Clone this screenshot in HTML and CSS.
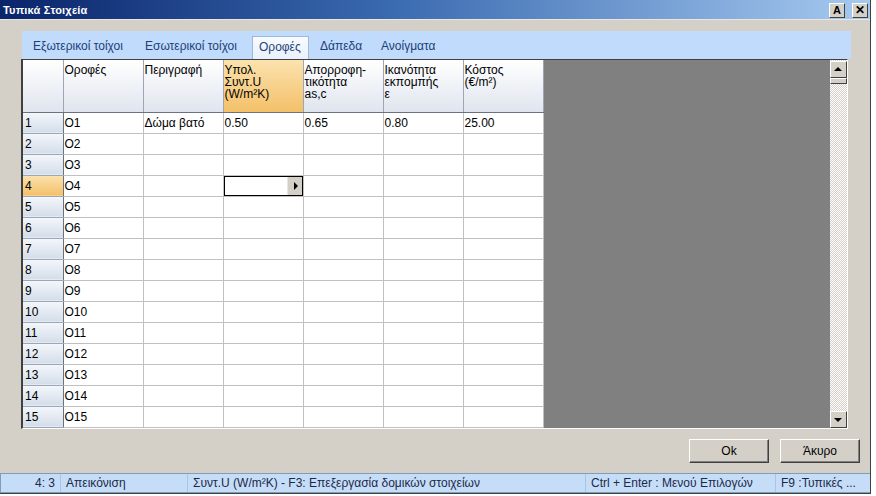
FILE: index.html
```html
<!DOCTYPE html>
<html>
<head>
<meta charset="utf-8">
<link rel="stylesheet" href="styles.css">
</head>
<body>
<div class="window">
  <div class="titlebar">
    <span class="title">Τυπικά Στοιχεία</span>
    <div class="tbtns">
      <span class="tbtn">A</span>
      <span class="tbtn x">✕</span>
    </div>
  </div>
  <div class="content">
    <div class="tabstrip">
      <span class="tab">Εξωτερικοί τοίχοι</span>
      <span class="tab">Εσωτερικοί τοίχοι</span>
      <span class="tab active">Οροφές</span>
      <span class="tab">Δάπεδα</span>
      <span class="tab">Ανοίγματα</span>
    </div>
    <div class="gridbox">
      <table class="grid">
        <thead>
          <tr>
            <th class="rh"></th>
            <th>Οροφές</th>
            <th>Περιγραφή</th>
            <th class="sel">Υπολ.<br>Συντ.U<br>(W/m²K)</th>
            <th>Απορροφη-<br>τικότητα<br>as,c</th>
            <th>Ικανότητα<br>εκπομπής<br>ε</th>
            <th>Κόστος<br>(€/m²)</th>
          </tr>
        </thead>
        <tbody>
          <tr><td class="rh">1</td><td>O1</td><td>Δώμα βατό</td><td>0.50</td><td>0.65</td><td>0.80</td><td>25.00</td></tr>
          <tr><td class="rh">2</td><td>O2</td><td></td><td></td><td></td><td></td><td></td></tr>
          <tr><td class="rh">3</td><td>O3</td><td></td><td></td><td></td><td></td><td></td></tr>
          <tr><td class="rh sel">4</td><td>O4</td><td></td><td class="edit"><span class="editor"><span class="ebtn"></span></span></td><td></td><td></td><td></td></tr>
          <tr><td class="rh">5</td><td>O5</td><td></td><td></td><td></td><td></td><td></td></tr>
          <tr><td class="rh">6</td><td>O6</td><td></td><td></td><td></td><td></td><td></td></tr>
          <tr><td class="rh">7</td><td>O7</td><td></td><td></td><td></td><td></td><td></td></tr>
          <tr><td class="rh">8</td><td>O8</td><td></td><td></td><td></td><td></td><td></td></tr>
          <tr><td class="rh">9</td><td>O9</td><td></td><td></td><td></td><td></td><td></td></tr>
          <tr><td class="rh">10</td><td>O10</td><td></td><td></td><td></td><td></td><td></td></tr>
          <tr><td class="rh">11</td><td>O11</td><td></td><td></td><td></td><td></td><td></td></tr>
          <tr><td class="rh">12</td><td>O12</td><td></td><td></td><td></td><td></td><td></td></tr>
          <tr><td class="rh">13</td><td>O13</td><td></td><td></td><td></td><td></td><td></td></tr>
          <tr><td class="rh">14</td><td>O14</td><td></td><td></td><td></td><td></td><td></td></tr>
          <tr><td class="rh">15</td><td>O15</td><td></td><td></td><td></td><td></td><td></td></tr>
        </tbody>
      </table>
      <div class="filler"></div>
      <div class="vscroll">
        <span class="sbtn up"></span>
        <span class="thumb"></span>
        <span class="track"></span>
        <span class="sbtn down"></span>
      </div>
    </div>
  </div>
  <div class="buttons">
    <button class="btn">Ok</button>
    <button class="btn">Άκυρο</button>
  </div>
  <div class="statusbar">
    <span class="sb s1">4: 3</span>
    <span class="sb s2">Απεικόνιση</span>
    <span class="sb s3">Συντ.U (W/m²K) - F3: Επεξεργασία δομικών στοιχείων</span>
    <span class="sb s4">Ctrl + Enter : Μενού Επιλογών</span>
    <span class="sb s5">F9 :Τυπικές ...</span>
  </div>
</div>
</body>
</html>
```

FILE: styles.css
```css
* { box-sizing: border-box; }
html, body { margin: 0; padding: 0; }
body {
  background: #ffffff;
  font-family: "Liberation Sans", Arial, sans-serif;
  font-size: 12px;
  color: #000;
  width: 876px;
  height: 496px;
  overflow: hidden;
}
.window {
  width: 871px;
  height: 494px;
  background: #d4d0c8;
  border-right: 1px solid #404040;
  border-bottom: 1px solid #404040;
  display: flex;
  flex-direction: column;
}
.titlebar {
  height: 21px;
  background: linear-gradient(to right, #0a246a 0%, #3a6ab0 45%, #a6caf0 100%);
  display: flex;
  align-items: center;
  justify-content: space-between;
  padding: 0 2px 0 3px;
  border-bottom: 1px solid #e8e6e0;
}
.title {
  color: #fff;
  font-weight: bold;
  font-size: 11px;
  letter-spacing: 0.2px;
}
.tbtns { display: flex; gap: 7px; padding-top: 1px; }
.tbtn {
  width: 16px;
  height: 15px;
  background: #d4d0c8;
  border: 1px solid;
  border-color: #fff #404040 #404040 #fff;
  font-size: 11px;
  font-weight: bold;
  line-height: 13px;
  text-align: center;
  color: #000;
}
.tbtn.x { font-size: 12px; }
.content {
  padding: 11px 0 0 22px;
}
.tabstrip {
  width: 829px;
  height: 28px;
  background: #c0dbfb;
  display: flex;
  align-items: flex-end;
  padding-left: 5px;
}
.tab {
  height: 23px;
  line-height: 21px;
  padding: 0 6px;
  color: #1c3f78;
  white-space: nowrap;
}
.tab:nth-child(1) { width: 112px; }
.tab:nth-child(2) { width: 113px; }
.tab.active {
  width: 57px;
  background: linear-gradient(#f8fbff, #e9f1fb);
  border: 1px solid #9eb8d8;
  border-bottom: none;
}
.tab:nth-child(4) { width: 66px; padding-left: 11px; }
.gridbox {
  width: 827px;
  height: 370px;
  margin-left: -1px;
  display: flex;
  border-top: 1px solid #404040;
  border-left: 2px solid #404040;
  border-right: 1px solid #ffffff;
  border-bottom: 1px solid #ffffff;
  background: #808080;
}
.grid {
  border-collapse: collapse;
  table-layout: fixed;
  width: 520px;
  background: #fff;
  align-self: flex-start;
}
.grid th, .grid td {
  width: 80px;
  border-right: 1px solid #c0c0c0;
  border-bottom: 1px solid #c0c0c0;
  padding: 0 0 0 1px;
  text-align: left;
  white-space: nowrap;
  overflow: hidden;
}
.grid th.rh, .grid td.rh { width: 40px; padding-left: 2px; }
.grid th {
  height: 52px;
  vertical-align: top;
  font-weight: normal;
  line-height: 12px;
  padding-top: 4px;
  background: linear-gradient(#ffffff, #dfe5ee);
  border-right: 1px solid #9ca6b4;
  border-bottom: 1px solid #6a7280;
  color: #000;
}
.grid th.sel {
  background: linear-gradient(#fbe2ae, #f3c069);
}
.grid td {
  height: 21px;
  line-height: 20px;
  vertical-align: middle;
}
.grid td.rh {
  background: linear-gradient(#f4f7fb, #d3dde9);
  border-right: 1px solid #6a7280;
  border-bottom: 1px solid #9ca6b4;
}
.grid td.rh.sel {
  background: linear-gradient(#fbe2ae, #f3c069);
}
.grid td.edit {
  padding: 0;
  box-shadow: inset 0 0 0 1px #000;
}
.editor {
  display: flex;
  justify-content: flex-end;
  height: 20px;
  padding: 1px 1px 1px 0;
}
.ebtn {
  width: 15px;
  height: 18px;
  background: #d4d0c8;
  border-left: 1px solid #e8e6e0;
  position: relative;
}
.ebtn::after {
  content: "";
  position: absolute;
  left: 6px;
  top: 5px;
  border-left: 4px solid #000;
  border-top: 4px solid transparent;
  border-bottom: 4px solid transparent;
}
.filler { flex: 1; }
.vscroll {
  width: 17px;
  display: flex;
  flex-direction: column;
  padding-top: 1px;
  background: repeating-conic-gradient(#d4d0c8 0 25%, #ffffff 0 50%) 0 0 / 2px 2px;
}
.sbtn {
  width: 17px;
  height: 17px;
  background: #d4d0c8;
  border: 1px solid;
  border-color: #fff #404040 #404040 #fff;
  position: relative;
  flex: none;
}
.sbtn::after {
  content: "";
  position: absolute;
  left: 3px;
  border-left: 4px solid transparent;
  border-right: 4px solid transparent;
}
.sbtn.up::after { top: 5px; border-bottom: 4px solid #000; }
.sbtn.down::after { top: 6px; border-top: 4px solid #000; }
.thumb {
  height: 6px;
  background: #d4d0c8;
  border: 1px solid;
  border-color: #fff #404040 #404040 #fff;
  flex: none;
}
.track { flex: 1; }
.buttons {
  display: flex;
  justify-content: flex-end;
  gap: 11px;
  padding: 10px 10px 0 0;
}
.btn {
  width: 80px;
  height: 24px;
  background: #d4d0c8;
  border: 1px solid;
  border-color: #fff #404040 #404040 #fff;
  box-shadow: inset -1px -1px 0 #808080;
  font-family: "Liberation Sans", Arial, sans-serif;
  font-size: 12px;
  color: #000;
  padding: 0;
}
.statusbar {
  margin-top: 10px;
  height: 20px;
  display: flex;
  background: #c6ddf8;
  border-top: 1px solid #7f9db9;
  border-bottom: 1px solid #7f9db9;
  color: #1a2a4a;
}
.sb {
  line-height: 19px;
  white-space: nowrap;
  border-right: 1px solid #aac4e4;
  padding-left: 5px;
}
.s1 { width: 61px; text-align: right; padding-right: 5px; border-left: 1px solid #7f9db9; }
.s2 { width: 127px; }
.s3 { width: 398px; }
.s4 { width: 190px; }
.s5 { flex: 1; border-right: none; }
```
